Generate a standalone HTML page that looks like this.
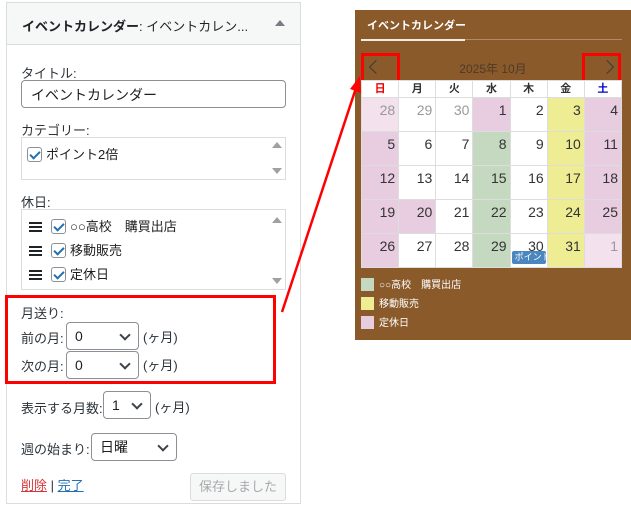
<!DOCTYPE html>
<html><head><meta charset="utf-8"><style>
*{box-sizing:border-box;margin:0;padding:0}
body{width:631px;height:508px;background:#fff;position:relative;overflow:hidden;font-family:"Liberation Sans","Noto Sans CJK JP",sans-serif;font-size:13px;color:#1e1e1e}
.a{position:absolute}
.lbl{position:absolute;font-size:13px;color:#2c3338}
.box{position:absolute;border:1px solid #dcdcde;background:#fff}
.cb{display:inline-block;width:15px;height:15px;border:1px solid #8c8f94;border-radius:3px;vertical-align:-3px;position:relative;margin-right:4px;background:#fff}
.cb:after{content:"";position:absolute;left:4px;top:1px;width:4px;height:8px;border:solid #2271b1;border-width:0 2px 2px 0;transform:rotate(45deg)}
.sel{position:absolute;border:1px solid #8c8f94;border-radius:4px;background:#fff;font-size:14px;padding-left:8px;line-height:26px}
.sel:after{content:"";position:absolute;right:9px;top:8px;width:6px;height:6px;border:solid #3c434a;border-width:0 2px 2px 0;transform:rotate(45deg)}
.ham{display:inline-block;width:13px;height:10px;border-top:2px solid #1d2327;border-bottom:2px solid #1d2327;position:relative;vertical-align:-1px;margin-right:9px}
.ham:after{content:"";position:absolute;left:0;right:0;top:2px;border-top:2px solid #1d2327}
.up,.dn{position:absolute;width:0;height:0;border-left:5px solid transparent;border-right:5px solid transparent}
.up{border-bottom:6px solid #a0a0a0}.dn{border-top:6px solid #a0a0a0}
.cal{position:absolute;left:355px;top:10px;width:276px;height:330px;background:#8a5a2b}
.g{position:absolute;left:6px;top:70px;width:261px;display:grid;grid-template-columns:repeat(7,1fr);background:#ddd;gap:1px;border:1px solid #ddd}
.g div{background:#fff;height:33px;text-align:right;padding:4px 3px 0 0;font-size:14px;color:#333}
.g .h{height:16px;text-align:center;padding:0;font-size:11px;font-weight:bold;line-height:16px;color:#333}
.p{background:#e8cce0!important}.lp{background:#f3e1ee!important}.gr{background:#c5d8c0!important}.y{background:#eeed94!important}
.gy{color:#999!important}
.lg{position:absolute;left:6px;font-size:10px;color:#fff}
.lg i{display:inline-block;width:13px;height:13px;vertical-align:-3px;margin-right:5px}
</style></head><body>
<div class="a" style="left:6px;top:2px;width:295px;height:502px;border:1px solid #dcdcde;border-bottom-color:#dcdcde"></div>
<div class="a" style="left:7px;top:3px;width:293px;height:42px;background:#f6f7f7;border-bottom:1px solid #dcdcde"></div>
<div class="a" style="left:22px;top:16px;font-size:13px;font-weight:bold;color:#1d2327">イベントカレンダー<span style="font-weight:normal">: イベントカレン...</span></div>
<div class="up" style="left:275px;top:20px;border-bottom-color:#787c82"></div>
<div class="lbl" style="left:21px;top:63px">タイトル:</div>
<div class="a" style="left:21px;top:80px;width:265px;height:28px;border:1px solid #8c8f94;border-radius:4px;font-size:14px;padding:4px 9px">イベントカレンダー</div>
<div class="lbl" style="left:21px;top:120px">カテゴリー:</div>
<div class="box" style="left:21px;top:137px;width:265px;height:43px;padding:6px 5px"><span class="cb"></span>ポイント2倍
<div class="up" style="left:250px;top:4px"></div><div class="dn" style="left:250px;top:30px"></div></div>
<div class="lbl" style="left:21px;top:192px">休日:</div>
<div class="box" style="left:21px;top:209px;width:265px;height:81px;padding:5px 7px;line-height:24px">
<div><span class="ham"></span><span class="cb"></span>○○高校　購買出店</div>
<div><span class="ham"></span><span class="cb"></span>移動販売</div>
<div><span class="ham"></span><span class="cb"></span>定休日</div>
<div class="up" style="left:250px;top:7px"></div><div class="dn" style="left:250px;top:68px"></div></div>
<div class="a" style="left:5px;top:295px;width:271px;height:89px;border:3px solid #f00"></div>
<div class="lbl" style="left:21px;top:303px">月送り:</div>
<div class="lbl" style="left:21px;top:328px">前の月:</div>
<div class="sel" style="left:66px;top:322px;width:73px;height:28px">0</div>
<div class="lbl" style="left:143px;top:327px">(ヶ月)</div>
<div class="lbl" style="left:21px;top:356px">次の月:</div>
<div class="sel" style="left:66px;top:351px;width:73px;height:28px">0</div>
<div class="lbl" style="left:143px;top:355px">(ヶ月)</div>
<div class="lbl" style="left:21px;top:398px">表示する月数:</div>
<div class="sel" style="left:103px;top:391px;width:48px;height:28px">1</div>
<div class="lbl" style="left:155px;top:397px">(ヶ月)</div>
<div class="lbl" style="left:21px;top:439px">週の始まり:</div>
<div class="sel" style="left:91px;top:433px;width:86px;height:28px">日曜</div>
<div class="lbl" style="left:21px;top:475px"><span style="color:#d63638;text-decoration:underline">削除</span> | <span style="color:#2271b1;text-decoration:underline">完了</span></div>
<div class="a" style="left:190px;top:473px;width:96px;height:28px;background:#f6f7f7;border:1px solid #dcdcde;border-radius:3px;color:#a7aaad;font-size:13px;text-align:center;line-height:26px">保存しました</div>

<div class="cal">
<div class="a" style="left:12px;top:7px;color:#fff;font-weight:bold;font-size:11px">イベントカレンダー</div>
<div class="a" style="left:6px;top:29px;width:261px;height:1px;background:#b08a66"></div>
<div class="a" style="left:6px;top:29px;width:104px;height:2px;background:#f3ece4"></div>
<div class="a" style="left:0;top:50px;width:276px;text-align:center;color:#4d3a28;font-size:12px">2025年 10月</div>
<div class="a" style="left:16px;top:52px;width:10px;height:10px;border:solid #3b3b3b;border-width:0 0 1.5px 1.5px;transform:rotate(45deg)"></div>
<div class="a" style="left:247px;top:52px;width:10px;height:10px;border:solid #3b3b3b;border-width:1.5px 1.5px 0 0;transform:rotate(45deg)"></div>
<div class="a" style="left:6px;top:43px;width:39px;height:30px;border:3px solid #f00"></div>
<div class="a" style="left:227px;top:43px;width:39px;height:30px;border:3px solid #f00"></div>
<div class="g">
<div class="h" style="color:#e00">日</div><div class="h">月</div><div class="h">火</div><div class="h">水</div><div class="h">木</div><div class="h">金</div><div class="h" style="color:#00c">土</div>
<div class="lp gy">28</div><div class="gy">29</div><div class="gy">30</div><div class="p">1</div><div>2</div><div class="y">3</div><div class="p">4</div>
<div class="p">5</div><div>6</div><div>7</div><div class="gr">8</div><div>9</div><div class="y">10</div><div class="p">11</div>
<div class="p">12</div><div>13</div><div>14</div><div class="gr">15</div><div>16</div><div class="y">17</div><div class="p">18</div>
<div class="p">19</div><div class="p">20</div><div>21</div><div class="gr">22</div><div>23</div><div class="y">24</div><div class="p">25</div>
<div class="p">26</div><div>27</div><div>28</div><div class="gr">29</div><div style="position:relative;overflow:hidden">30<span style="position:absolute;left:1px;top:17px;width:34px;height:13px;background:#4a86c0;color:#fff;font-size:9px;line-height:13px;text-align:left;padding-left:3px;border-radius:2px;white-space:nowrap;overflow:hidden">ポイント2倍</span></div><div class="y">31</div><div class="lp gy">1</div>
</div>
<div class="lg" style="top:266px"><i style="background:#c5d8c0"></i>○○高校　購買出店</div>
<div class="lg" style="top:285px"><i style="background:#eeed94"></i>移動販売</div>
<div class="lg" style="top:304px"><i style="background:#e8cce0"></i>定休日</div>
</div>
<svg class="a" style="left:0;top:0" width="631" height="508"><line x1="282" y1="312" x2="356" y2="88" stroke="#f00" stroke-width="2.5"/><polygon points="360,76 361,93 350,89" fill="#f00"/></svg>
</body></html>
